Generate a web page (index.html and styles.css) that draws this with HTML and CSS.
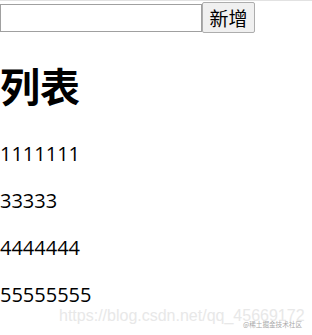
FILE: index.html
```
<!DOCTYPE html>
<html>
<head>
<meta charset="utf-8">
<link rel="stylesheet" href="styles.css">
</head>
<body>
<div class="topline"></div>
<div class="row">
  <input class="field" type="text">
  <button class="add">新增</button>
</div>
<h1 class="title">列表</h1>
<p class="item">1111111</p>
<p class="item">33333</p>
<p class="item">4444444</p>
<p class="item">55555555</p>
<p class="item">6666666</p>
<div class="watermark">https://blog.csdn.net/qq_45669172</div>
<div class="mark2">@稀土掘金技术社区</div>
</body>
</html>
```
FILE: styles.css
```
html, body {
  margin: 0;
  padding: 0;
  background: #fff;
  overflow: hidden;
}
body {
  font-family: "Open Sans", "Noto Sans CJK SC", sans-serif;
  color: #000;
  font-size: 20px;
  position: relative;
  height: 335px;
}
.topline {
  height: 1px;
  background: #e2e2e2;
}
.row {
  display: flex;
  align-items: flex-end;
  height: 32px;
}
.field {
  box-sizing: border-box;
  width: 202px;
  height: 28px;
  margin: 0 0 1px 0;
  border: 1px solid #a0a0a0;
  padding: 0;
  background: #fff;
}
.add {
  box-sizing: border-box;
  height: 31px;
  width: 53px;
  padding: 0;
  font-family: "Noto Sans CJK SC", sans-serif;
  font-size: 19px;
  color: #000;
  background: #f0f0f0;
  border: 1px solid #adadad;
  border-radius: 2px;
  line-height: 1;
}
.title {
  font-family: "Noto Sans CJK SC", sans-serif;
  font-size: 40px;
  font-weight: bold;
  line-height: 48px;
  margin: 28px 0 31px 0;
}
.item {
  margin: 20px 0;
  line-height: 27px;
  white-space: nowrap;
}
.watermark {
  position: absolute;
  left: 59px;
  top: 307px;
  font-family: "Liberation Sans", sans-serif;
  font-size: 16px;
  color: #e8e8e8;
  white-space: nowrap;
}
.mark2 {
  position: absolute;
  left: 243px;
  top: 320px;
  font-family: "Noto Sans CJK SC", sans-serif;
  font-size: 6.6px;
  line-height: 8px;
  color: #a8a8a8;
  white-space: nowrap;
}
```
